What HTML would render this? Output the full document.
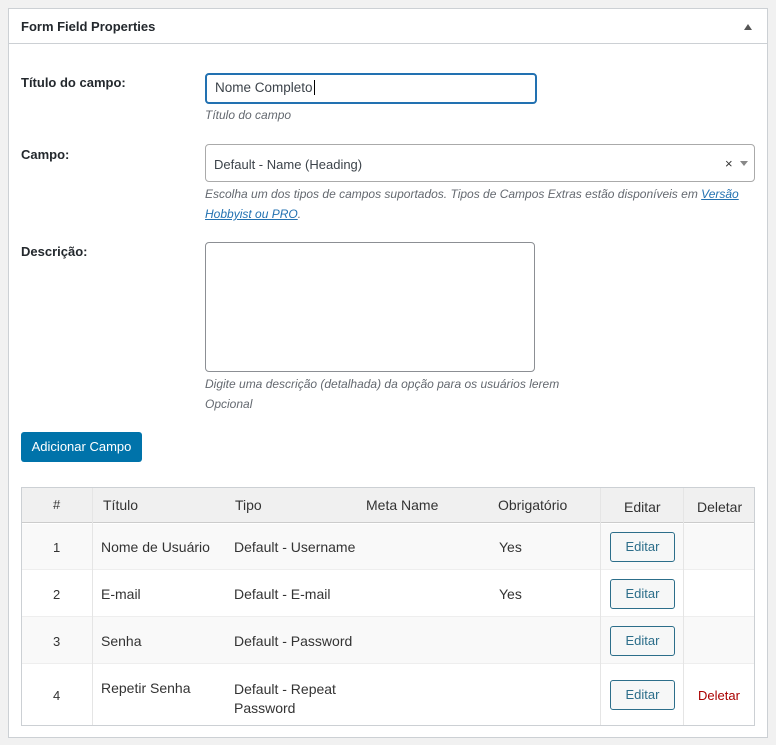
<!DOCTYPE html>
<html><head><meta charset="utf-8"><style>
*{box-sizing:border-box;margin:0;padding:0}
body{width:776px;height:745px;background:#f1f1f1;font-family:"Liberation Sans",sans-serif;color:#23282d;position:relative;overflow:hidden}
.a{position:absolute}
#panel{left:8px;top:8px;width:760px;height:730px;background:#fff;border:1px solid #ccd0d4}
#hd{left:0;top:0;width:758px;height:35px;border-bottom:1px solid #ccd0d4}
.lbl{font-size:13px;font-weight:bold;color:#23282d}
.desc{font-size:12px;font-style:italic;color:#646970;line-height:20px}
.tx{font-size:13.5px;color:#3c434a}
.cell{position:absolute;font-size:14px;color:#333}
.btn{position:absolute;width:65px;height:30px;border:1px solid #2c6e8a;border-radius:3px;background:#f6f7f7;color:#2c6e8a;font-size:13px;text-align:center;line-height:28px}
</style></head><body>
<div id="panel" class="a">
 <div id="hd" class="a"><div class="a lbl" style="left:12px;top:10px">Form Field Properties</div>
 <div class="a" style="left:735px;top:15px;width:0;height:0;border-left:4px solid transparent;border-right:4px solid transparent;border-bottom:6px solid #555"></div></div>
</div>
<div class="a lbl" style="left:21px;top:75px">Título do campo:</div>
<div class="a" style="left:205px;top:73px;width:332px;height:31px;border:2px solid #2271b1;border-radius:4px;background:#fff"></div>
<div class="a tx" style="left:215px;top:80px">Nome Completo<span style="border-left:1px solid #000;margin-left:1px"></span></div>
<div class="a desc" style="left:205px;top:105px">Título do campo</div>
<div class="a lbl" style="left:21px;top:147px">Campo:</div>
<div class="a" style="left:205px;top:144px;width:550px;height:38px;border:1px solid #aaa;border-radius:4px;background:#fff"></div>
<div class="a tx" style="left:214px;top:157px;font-size:13px">Default - Name (Heading)</div>
<div class="a" style="left:725px;top:156px;font-size:13px;color:#333">×</div>
<div class="a" style="left:740px;top:161px;width:0;height:0;border-left:4px solid transparent;border-right:4px solid transparent;border-top:5px solid #888"></div>
<div class="a desc" style="left:205px;top:184px;width:555px">Escolha um dos tipos de campos suportados. Tipos de Campos Extras estão disponíveis em <span style="color:#2271b1;text-decoration:underline">Versão Hobbyist ou PRO</span>.</div>
<div class="a lbl" style="left:21px;top:244px">Descrição:</div>
<div class="a" style="left:205px;top:242px;width:330px;height:130px;border:1px solid #8c8f94;border-radius:4px;background:#fff"></div>
<div class="a desc" style="left:205px;top:374px">Digite uma descrição (detalhada) da opção para os usuários lerem<br>Opcional</div>
<div class="a" style="left:21px;top:432px;width:121px;height:30px;background:#0073aa;border-radius:3px;color:#fff;font-size:13px;text-align:center;line-height:30px">Adicionar Campo</div>

<div class="a" style="left:21px;top:487px;width:734px;height:239px;border:1px solid #ccd0d4;background:#fff"></div>
<div class="a" style="left:22px;top:488px;width:732px;height:35px;background:#f0f0f0;border-bottom:1px solid #ccc"></div>
<div class="a" style="left:22px;top:524px;width:732px;height:46px;background:#f9f9f9;border-bottom:1px solid #eee"></div>
<div class="a" style="left:22px;top:570px;width:732px;height:47px;background:#fff;border-bottom:1px solid #eee"></div>
<div class="a" style="left:22px;top:617px;width:732px;height:47px;background:#f9f9f9;border-bottom:1px solid #eee"></div>
<div class="a" style="left:92px;top:488px;width:1px;height:237px;background:#e5e5e5"></div>
<div class="a" style="left:600px;top:488px;width:1px;height:237px;background:#e5e5e5"></div>
<div class="a" style="left:683px;top:488px;width:1px;height:237px;background:#e5e5e5"></div>

<div class="cell" style="left:53px;top:497px;font-size:13px">#</div>
<div class="cell" style="left:103px;top:497px">Título</div>
<div class="cell" style="left:235px;top:497px">Tipo</div>
<div class="cell" style="left:366px;top:497px">Meta Name</div>
<div class="cell" style="left:498px;top:497px">Obrigatório</div>
<div class="cell" style="left:624px;top:499px">Editar</div>
<div class="cell" style="left:697px;top:499px">Deletar</div>

<div class="cell" style="left:53px;top:540px;font-size:13px">1</div>
<div class="cell" style="left:101px;top:539px">Nome de Usuário</div>
<div class="cell" style="left:234px;top:539px">Default - Username</div>
<div class="cell" style="left:499px;top:539px">Yes</div>
<div class="btn" style="left:610px;top:532px">Editar</div>

<div class="cell" style="left:53px;top:587px;font-size:13px">2</div>
<div class="cell" style="left:101px;top:586px">E-mail</div>
<div class="cell" style="left:234px;top:586px">Default - E-mail</div>
<div class="cell" style="left:499px;top:586px">Yes</div>
<div class="btn" style="left:610px;top:579px">Editar</div>

<div class="cell" style="left:53px;top:634px;font-size:13px">3</div>
<div class="cell" style="left:101px;top:633px">Senha</div>
<div class="cell" style="left:234px;top:633px">Default - Password</div>
<div class="btn" style="left:610px;top:626px">Editar</div>

<div class="cell" style="left:53px;top:688px;font-size:13px">4</div>
<div class="cell" style="left:101px;top:680px">Repetir Senha</div>
<div class="cell" style="left:234px;top:680px;line-height:19px">Default - Repeat<br>Password</div>
<div class="btn" style="left:610px;top:680px">Editar</div>
<div class="cell" style="left:698px;top:688px;color:#a00;font-size:13px">Deletar</div>
</body></html>
